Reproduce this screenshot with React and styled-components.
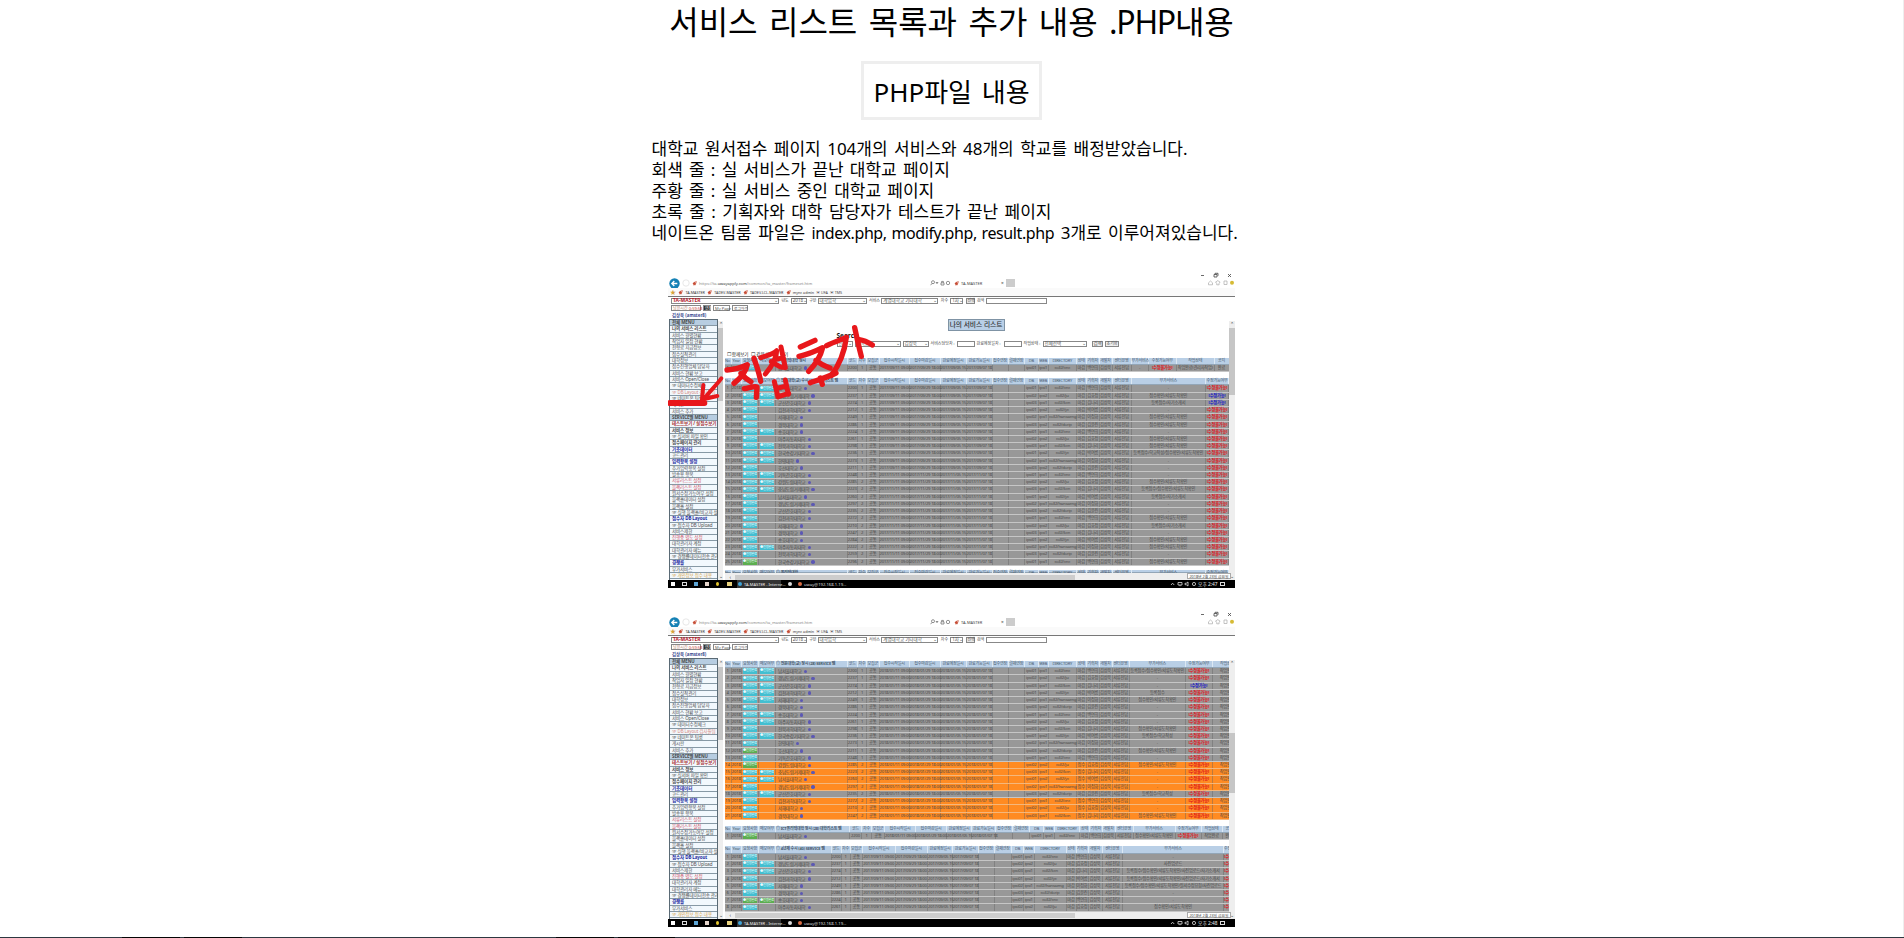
import React from "react";
import styled, { createGlobalStyle } from "styled-components";

const Global = createGlobalStyle`
  * { box-sizing: border-box; }
  html, body { margin: 0; background: #fff; }
  body {
    height: 938px; overflow: hidden; color: #000;
    font-family: "Noto Sans", "Noto Sans CJK KR", sans-serif;
  }
`;

const Page = styled.div`
  height: 938px;
  display: flex; flex-direction: column; align-items: center;
  border-right: 1px solid #eee;
`;
const Title = styled.h1`
  margin: 0; padding-top: 1px; height: 61px; line-height: 42px;
  font-size: 32px; font-weight: 400; white-space: nowrap; word-spacing: 3.1px;
`;
const Extension = styled.span`
  letter-spacing: -1.3px;
`;
const Badge = styled.h2`
  margin: 0; width: 181px; height: 59px; border: 3px solid #eee;
  line-height: 56px; text-align: center; font-size: 26px; font-weight: 400;
  white-space: nowrap; word-spacing: 3px;
`;
const Description = styled.div`
  margin: 18px 0 0; width: 600px; height: 131px; font-size: 17px; line-height: 21px;
`;
const Line = styled.p`
  margin: 0; white-space: nowrap; word-spacing: ${(p) => p.$ws}px;
`;
const FileNames = styled.span`
  font-size: 16px; letter-spacing: -0.4px; word-spacing: 1px;
`;
const Gallery = styled.div`
  flex: 1; display: flex; flex-direction: column; gap: 20px; width: 567px; min-height: 0;
`;
const Footer = styled.div`
  display: flex; align-self: stretch; height: 1px; background: #2d3740; margin-right: -1px;
`;
const Segment = styled.i`
  width: ${(p) => p.$w}px; height: 1px; background: ${(p) => (p.$dark ? "#050505" : "transparent")};
`;

const Shot = styled.section`
  position: relative; width: 567px; height: 319px; overflow: hidden; flex: none;
  display: flex; flex-direction: column; background: #fff;
  font-size: 5px; line-height: 7px; color: #444; white-space: nowrap;
`;
const Bar = styled.div`
  display: flex; align-items: center; gap: ${(p) => p.$gap || 3}px;
  height: ${(p) => p.$h}px; padding-left: ${(p) => p.$pl || 2}px; padding-top: ${(p) => p.$pt || 0}px; flex: none;
  ${(p) => p.$line && "border-bottom: 1px solid #777;"}
  background: ${(p) => p.$bg || "transparent"};
`;
const Spacer = styled.span`
  width: ${(p) => p.$w}px; flex: none;
`;
const Label = styled.span`
  flex: none; width: ${(p) => (p.$w ? p.$w + "px" : "auto")};
  color: ${(p) => p.$c || "#444"}; font-weight: ${(p) => (p.$b ? 700 : 400)};
  font-size: ${(p) => p.$s || 4.8}px;
`;
const Field = styled.span`
  flex: none; display: flex; justify-content: space-between; align-items: center;
  width: ${(p) => p.$w}px; height: ${(p) => p.$h || 6}px; line-height: 5px; padding-left: 1px; font-size: ${(p) => p.$s || 4.5}px;
  border: 0.5px solid #888; background: ${(p) => p.$bg || "#fff"}; color: ${(p) => p.$c || "#555"};
  font-weight: ${(p) => (p.$b ? 700 : 400)};
`;
const TabBlank = styled.span`
  width: 9px; height: 8px; background: #ccc; flex: none;
`;
const Viewport = styled.div`
  display: flex; height: 261px; flex: none; overflow: hidden;
`;
const Side = styled.nav`
  width: 49px; margin-left: 1px; border: 1px solid #5a6a75; border-bottom: 0; background: #f2f8fd; flex: none;
`;
const SideItem = styled.div`
  height: 6.34px; line-height: 5.8px; padding-left: 2px; font-size: 4.5px; letter-spacing: -0.1px;
  border-bottom: 0.5px solid #8799a5; color: ${(p) => p.$c || "#4c4c4c"};
  background: ${(p) => (p.$head ? "#b7cde1" : "transparent")};
  font-weight: ${(p) => (p.$b || p.$head ? 700 : 400)};
`;
const ScrollTrack = styled.div`
  display: flex; flex-direction: column; align-items: center; justify-content: space-between;
  width: ${(p) => p.$w}px; margin-top: ${(p) => p.$mt || 0}px; background: #eee; flex: none; color: #333;
`;
const Thumb = styled.i`
  width: 100%; height: ${(p) => p.$h}px; margin-bottom: auto; background: #c6c6c6;
`;
const Main = styled.main`
  width: 505px; padding-left: 0.5px; overflow: hidden; flex: none;
  display: flex; flex-direction: column;
`;
const ListTitle = styled.div`
  align-self: flex-start; margin: -1px 0 1px 223px; width: 57px; height: 12px; line-height: 10px;
  border: 1px solid #7f93a5; background: #b9cfe6; text-align: center; font-size: 6.7px; font-weight: 500; color: #333;
`;
const Gap = styled.div`
  height: ${(p) => p.$h}px; flex: none;
`;
const Grid = styled.div`
  display: grid; grid-template-columns: ${(p) => p.$cols}; height: ${(p) => p.$h || 7.22}px; flex: none;
  background: ${(p) => p.$bg}; border-bottom: 1px solid ${(p) => p.$edge || "#c4c4c4"};
`;
const Cell = styled.span`
  border-right: 0.8px solid ${(p) => (p.$head ? "#dce8f3" : "rgba(95,95,95,.4)")};
  text-align: ${(p) => (p.$left ? "left" : "center")};
  font-size: ${(p) => p.$s || 4.2}px; line-height: 6.2px; letter-spacing: -0.2px;
  color: ${(p) => p.$c || "#484848"}; font-weight: ${(p) => (p.$b ? 700 : 400)};
`;
const Tag = styled.b`
  display: block; margin: 0.3px auto 0; height: 5.6px; width: 14px; line-height: 5.4px; font-weight: 400; color: #e7fbff;
  background: ${(p) => (p.$green ? "#5cae50" : "#43bfd1")}; font-size: 3.2px;
`;
const Dot = styled.i`
  display: inline-block; width: 3.4px; height: 3.4px; border-radius: 50%; background: #5c58b4; margin-left: 2px;
`;
const HScroll = styled.div`
  height: 8px; margin-top: auto; display: flex; align-items: center; background: #eee; padding-left: 5px; flex: none;
`;
const HThumb = styled.i`
  margin-left: 4px; width: 340px; height: 4.5px; background: #cdcdcd;
`;
const DateTip = styled.div`
  position: absolute; right: 4px; bottom: 9px; width: 44px; height: 6px; line-height: 5px;
  background: #fff; border: 0.5px solid #aaa; font-size: 3.8px; text-align: center;
`;
const Taskbar = styled.footer`
  display: flex; align-items: center; height: 8px; background: #000; color: #eee; flex: none; padding-left: 3px;
  font-size: 4.3px;
`;
const TaskIcon = styled.i`
  width: ${(p) => p.$w || 4}px; height: 4px; margin-right: ${(p) => p.$mr || 7}px; flex: none;
  background: ${(p) => p.$c}; border: ${(p) => (p.$o ? "0.7px solid #ddd" : "0")};
  border-radius: ${(p) => (p.$round ? "50%" : "0")};
`;
const TaskTab = styled.span`
  display: flex; align-items: center; gap: 1px; width: 44px; height: 8px; background: #333; padding-left: 1px; margin-right: 7px; flex: none;
  font-size: 4px;
`;
const Ink = styled.svg`
  position: absolute; left: 0; top: 0; width: 567px; height: 319px;
`;
const SmallIcon = styled.svg`
  flex: none;
`;

const Rocket = () => (
  <SmallIcon width="5" height="5" viewBox="0 0 10 10">
    <path d="M9.5 0.5 4 2 1 5.5l2 .6L2 9l3-1.4.8 1.8L8 6z" fill="#c5472f" />
    <circle cx="6.5" cy="3.5" r="1" fill="#fff" />
  </SmallIcon>
);
const Back = () => (
  <SmallIcon width="11" height="11" viewBox="0 0 11 11">
    <circle cx="5.5" cy="5.5" r="5.2" fill="#1581b5" />
    <path d="M8.3 5.5H3M5.3 3 2.8 5.5 5.3 8" fill="none" stroke="#fff" strokeWidth="1.3" />
  </SmallIcon>
);
const Forward = () => (
  <SmallIcon width="8" height="8" viewBox="0 0 8 8">
    <circle cx="4" cy="4" r="3.2" fill="none" stroke="#ddd" strokeWidth=".7" />
  </SmallIcon>
);
const SearchTools = () => (
  <SmallIcon width="22" height="6" viewBox="0 0 22 6" fill="none" stroke="#666" strokeWidth=".7">
    <circle cx="3" cy="2.2" r="1.5" /><path d="M2 3.4.6 5.2M6 2.5h2l-1 1.2zM11 2.8h3V5h-3zM11.6 2.6V1.4h1.8v1.2" />
    <circle cx="18" cy="3" r="1.7" />
  </SmallIcon>
);
const WindowIcons = () => (
  <SmallIcon width="37" height="17" viewBox="0 0 37 17">
    <path d="M2 5.5h3M15 4.5h3v2.5h-3zM16 4V3.3h3v2.5M29 4l3 3M32 4l-3 3" fill="none" stroke="#444" strokeWidth=".8" />
    <path d="m9.5 12.8 2-1.8 2 1.8v2h-4zM16.5 12l1.6-.6.7-1 .8 1 1.5.6-1 1.3v1.5h-2.4v-1.5zM25 11h3v3.5h-3z" fill="none" stroke="#aaa" strokeWidth=".7" />
    <circle cx="33" cy="12.8" r="2" fill="#d6bb35" />
  </SmallIcon>
);
const TrayIcons = () => (
  <SmallIcon width="28" height="6" viewBox="0 0 28 6" fill="none" stroke="#ddd" strokeWidth=".8">
    <path d="m1 4 1.6-1.8L4.2 4M8 1.5h4V4H8zM10 4v1.2M15 2.3h1.2L18 1v4l-1.8-1.3H15z" />
    <circle cx="24" cy="3" r="1.6" />
  </SmallIcon>
);

const menu = [
  ["전체 MENU", "h"], ["나의 서비스 리스트", "b"], ["서비스 월별현황"], ["작업자 일정 현황"], ["전형료 지급정보"],
  ["접수실적관리"], ["대학정보"], ["접수진행업체 담당자"], ["서비스 현황 보고"], ["서비스 Open/Close"],
  ["☞ 데이터수정체크"], ["☞ DB Layout 검사툴팁", "", "#d88c83"], ["☞ 네이트온 팀룸"], ["게시판"], ["서비스 추가"],
  ["SERVICE별 MENU", "h"], ["테스트보기 / 실접수보기", "b", "#a33"], ["서비스 정보", "b"], ["☞ 실서버 파일 확인"], ["접수페이지 관리", "b"],
  ["기초데이터", "b", "#2329a0"], ["코드관리"], ["입력항목 설정", "b", "#2329a0"], ["추가입력항목 설정"], ["발송용 항목"],
  ["서류리스트 설정", "", "#d05263"], ["블랙리스트 설정", "", "#d05263"], ["원서수정가능여부 설정"], ["블랙홀데이터 설정"], ["블랙홀 설정"],
  ["☞ 실행 블랙홀/비교자 설정"], ["접수자 DB Layout", "b", "#2329a0"], ["☞ 접수자 DB Upload"], ["서비스제한"], ["진행중 별도 설정", "", "#d05263"],
  ["대학관리자 계정"], ["대학관리자 메뉴"], ["☞ 경쟁률데이터전송 관리"], ["경쟁률", "b", "#2329a0"], ["부가서비스"], ["☞ 개인정보 접수 내용", "", "#d8a74e"],
];

const left = [7, 10.5, 17, 17, 71.5, 10.5, 9, 12.5, 30.5, 30.5, 26, 26, 16, 16.5, 13.5, 10.5, 27.5, 10.5, 12.5, 13, 19];
const listCols = [...left, 74.5, 23, 30, 20];
const topCols = [...left, 17, 28.5, 37.5, 15];
const wideCols = [...left.slice(0, 20), 17, 56.5, 26.5, 30, 20];
const midCols = [7, 10.5, 17, 17, 74, 12, 10, 13, 31, 31, 25, 24, 17, 17, 14, 11, 25, 10, 12.5, 13, 18, 42, 26, 21, 14];
const groupCols = [7, 10.5, 17, 17, 55.5, 10, 9, 12.5, 32.5, 32.5, 25, 25.5, 16, 17.5, 12, 10.5, 32, 10, 12, 14, 20.5, 101, 20, 20, 20];
const px = (a) => a.map((n) => n + "px").join(" ");

const heads = ["No", "Year", "요청사항", "메모여부", "", "코드", "차수", "모집군", "접수시작일시", "접수마감일시", "완료예정일시", "완료가능일시", "접수연장", "결제연장", "DB", "WEB", "DIRECTORY", "상태", "기획자", "개발자", "센터운영", "부가서비스", "수정가능여부", "작업상태", "공지"];
const schools = ["남서울대학교", "경남도립거제대학", "군산간호대학교", "김천과학대학교", "서해대학교", "경북대학교", "송호대학교", "아주자동차대학", "전북과학대학교", "한국승강기대학교", "한영대학", "호산대학교", "기독간호대학교", "강원도립대학교", "충남도립거제대학"];
const planners = ["백연희", "김효정", "김나리", "박여름", "이정화", "김윤진"];
const dirs = ["coll2/cnc", "coll2/ju", "coll2/kcn", "coll2/yc", "coll2/hansaeng", "coll2/dorip"];
const extras = ["-", "접수확인/서류도착확인", "등록접수/자기소개서", "-", "접수확인/서류도착확인", "접수확인/서류도착확인", "-", "접수확인/서류도착확인", "접수확인/서류도착확인", "등록접수/학교작성/접수확인/서류도착확인", "-", "-", "-", "접수확인/서류도착확인", "등록접수/접수확인/서류도착확인", "등록접수/자기소개서", "-"];
const wideExtras = ["등록접수/접수확인/서류도착확인", "-", "-", "등록접수", "접수확인/서류도착확인", "-", "-", "-", "접수확인/서류도착확인", "등록접수/학교작성", "-", "접수확인/서류도착확인", "-", "접수확인/서류도착확인", "-", "-", "-", "등록접수/학교작성", "-", "-", "접수확인/서류도착확인"];
const groupExtras = ["-", "사진업로드", "등록접수/접수확인/서류도착확인/사진업로드/자기소개서", "등록접수/접수확인/서류도착확인/사진업로드/자기소개서", "등록접수/접수확인/서류도착확인/원서수정요청/사진업로드", "-", "-", "접수확인/서류도착확인"];

function Header({ cols, title, h }) {
  return (
    <Grid $cols={px(cols)} $bg="#b9cfe6" $edge="#93a6b7" $h={h}>
      {heads.map((t, i) => (
        <Cell key={i} $head $left={i === 4} $b={i === 4} $c="#47576a" $s={4}>{i === 4 ? title : t}</Cell>
      ))}
    </Grid>
  );
}

function Row({ cols, i, year = "2017/09", orange, green, two, blue, state, extra }) {
  const s = schools[i % schools.length];
  const vals = [i + 1, "2018", null, null, s, 2200 + ((i * 37) % 99), i > 12 ? 2 : 1, "공통", year + "/11 09:00", year + "/29 18:00", year + "/05 15", year + "/07 18", "", "", "ipsi0" + (i % 3 + 1), "ipsi" + (i % 2 + 1), dirs[i % 6], orange ? "접수" : "마감", planners[i % 6], "김상욱", "서류전담", extra || extras[i % extras.length], "[수정불가능]", state || "작업완료", "완료"];
  return (
    <Grid $cols={px(cols)} $bg={orange ? "#ff8b22" : "#989898"} $edge={orange ? "#f4b77c" : "#c6c6c6"}>
      {vals.map((v, k) => {
        if (k === 2) return <Cell key={k}><Tag $green={green}>●진행완료</Tag></Cell>;
        if (k === 3) return <Cell key={k}>{two ? <Tag $green={green && two === 2}>●진행완료</Tag> : null}</Cell>;
        if (k === 4) return <Cell key={k} $left $s={4.5}>&nbsp;&nbsp;{v}<Dot /></Cell>;
        if (k === 22) return <Cell key={k} $b $c={blue ? "#1515c8" : "#e0141b"}>{blue ? "[수정가능]" : v}</Cell>;
        return <Cell key={k}>{v}</Cell>;
      })}
    </Grid>
  );
}

function Chrome({ time, top, children, ink, rightThumb, rightMt }) {
  return (
    <Shot>
      <Bar $h={19} $gap={2} $pl={1}>
        <Bar $h={19} $pt={9} $gap={2} $pl={0.1}>
          <Back />
          <Forward />
          <Rocket />
          <Label $w={229} $c="#888" $s={4}>https://ta.<Label $c="#333" $s={4}>uwayapply.com</Label>/common/ta_master/frameset.htm</Label>
          <SearchTools />
          <Rocket />
          <Label $w={38} $s={4}>TA-MASTER</Label>
          <Label>×</Label>
          <TabBlank />
        </Bar>
        <Spacer $w={180} />
        <WindowIcons />
      </Bar>
      <Bar $h={9} $gap={2.2} $line $bg="#fafafa">
        <Label $c="#d6a23c" $s={6}>★</Label>
        {["TA-MASTER", "TADEV-MASTER", "TADEV.LCL-MASTER", "mync admin"].map((t) => (
          <React.Fragment key={t}><Rocket /><Label $s={3.7} $c="#333">{t}</Label></React.Fragment>
        ))}
        <Label $s={3.7}>▣ UFA</Label><Label $s={3.7}>▣ TMS</Label>
      </Bar>
      <Bar $h={7.5} $gap={2.4} $pl={3}>
        <Field $w={108} $c="#b3202a" $b $s={5}>TA-MASTER<Label>⌄</Label></Field>
        <Label $w={7} $s={4}>년도</Label><Field $w={16}>2018<Label>⌄</Label></Field>
        <Label $w={6} $s={4}>구분</Label><Field $w={49}>대학입학<Label>⌄</Label></Field>
        <Label $w={10} $s={4}>서비스</Label><Field $w={57}>계명대학교 기타대학<Label>⌄</Label></Field>
        <Label $w={7} $s={4}>차수</Label><Field $w={13}>1차<Label>⌄</Label></Field>
        <Field $w={9} $bg="#e6e6e6" $s={4}>선택</Field>
        <Label $w={7} $s={4}>검색</Label><Field $w={61} />
      </Bar>
      <Bar $h={7} $gap={2} $pl={3}>
        <Field $w={30} $c="#c5362f"><Label $s={4} $c="#b9846b">남은시간 <Label $s={4} $c="#c5362f">0:59:58</Label></Label></Field>
        <Field $w={8} $bg="#333" $c="#fff" $s={4}>연장</Field>
        <Field $w={17} $s={4}>My Page</Field><Field $w={16} $s={3.8}>로그아웃</Field>
      </Bar>
      <Bar $h={7.5} $pl={4}><Label $b $c="#3c4a90" $s={4.4}>김상욱 (amster8)</Label></Bar>
      <Viewport>
        <Side>
          {menu.map(([t, k, c], i) => (
            <SideItem key={i} $head={k === "h"} $b={k === "b"} $c={c}>{t}</SideItem>
          ))}
        </Side>
        <ScrollTrack $w={5} $mt={2}><span>⌃</span><Thumb $h={73} /><span>⌄</span></ScrollTrack>
        <Spacer $w={1} />
        <Main>
          <Gap $h={top} />
          {children}
          <HScroll>‹<HThumb /></HScroll>
        </Main>
        <ScrollTrack $w={6} $mt={2}><span>⌃</span><Gap $h={rightMt} /><Thumb $h={rightThumb} /><span>⌄</span></ScrollTrack>
      </Viewport>
      {ink}
      <DateTip>2018년 2월 23일 금요일</DateTip>
      <Taskbar>
        <TaskIcon $c="#fff" $mr={7} /><TaskIcon $o $w={5} /><TaskIcon $c="#5da5d5" /><TaskIcon $c="#e6d6cc" /><TaskIcon $c="#e5c62e" $round $w={3} $mr={8} /><TaskIcon $c="#ead37f" $w={5} $mr={5} />
        <TaskTab><TaskIcon $c="#3fa4d8" $round $mr={1} />TA-MASTER - Interne...</TaskTab>
        <TaskIcon $c="#ddd" $round $mr={6} /><TaskIcon $c="#d96d45" $round $mr={2} />
        <Label $c="#ddd" $w={366} $s={4.2}>uway@192.168.1.19...</Label>
        <TrayIcons />
        <Label $c="#eee" $w={22} $s={4.8}>오후 {time}</Label>
        <TaskIcon $o $w={4.5} $mr={1} />
      </Taskbar>
    </Shot>
  );
}

const Handwriting = () => (
  <Ink viewBox="24 -138 1701 957" fill="none" stroke="#e8171b" strokeLinecap="round" strokeLinejoin="round">
    <path strokeWidth="18" d="M30 264H133" />
    <path strokeWidth="12" d="M184 190C168 212 146 232 134 250M130 210 126 254 172 243" />
    <path strokeWidth="16" d="M201 165C222 164 244 158 262 149C258 171 244 187 222 205M243 175C252 187 263 194 273 200M282 130C288 149 297 171 302 199M253 221C268 219 284 212 291 216L289 247" />
    <path strokeWidth="15" d="M302 128C323 121 339 118 350 107C350 131 336 153 316 177M334 140C348 147 357 155 366 157M363 96 376 158M346 134 370 128M343 200 354 246M376 195 385 238M349 220 380 213M355 245 386 235" />
    <path strokeWidth="16" d="M421 96 465 76M417 124C441 119 466 109 488 98C481 127 465 150 446 169M468 136C480 147 494 153 510 159M451 203C478 194 502 187 528 174M481 189 487 208" />
    <path strokeWidth="16" d="M500 92C522 81 543 74 559 67C554 108 542 144 514 181M584 38C590 66 596 94 604 124M598 74C612 76 624 82 637 90" />
  </Ink>
);

function FirstShot() {
  const pairs = [0, 1, 2, 6, 8, 9, 10, 12, 13, 14, 22];
  return (
    <Chrome time="2:47" top={0} ink={<Handwriting />} rightThumb={67} rightMt={0}>
      <Gap $h={0.5} />
      <ListTitle>나의 서비스 리스트</ListTitle>
      <Bar $h={8} $pl={112}><Label $b $c="#111" $s={6.5}>Search</Label></Bar>
      <Bar $h={8} $pl={112} $gap={2}>
        <Field $w={16}>전체<Label>⌄</Label></Field><Field $w={46}>대학교<Label>⌄</Label></Field><Field $w={26}>김상욱<Label>⌄</Label></Field>
        <Label $w={24} $s={4}>서비스담당자 :</Label><Field $w={18} /><Label $w={25} $s={4}>완료예정일자 :</Label><Field $w={18} />
        <Label $w={17} $s={4}>작업상태 :</Label><Field $w={44}>전체선택<Label>⌄</Label></Field>
        <Spacer $w={1} /><Field $w={11} $bg="#eee">검색</Field><Field $w={14} $bg="#eee" $s={4}>초기화</Field>
      </Bar>
      <Gap $h={3} />
      <Bar $h={7} $gap={2}><Label $c="#222" $s={4.6}>☐ 함께보기 &nbsp;☐ 같은 대학만 보기</Label></Bar>
      <Header cols={topCols} title="◎ 폴리텍대학 정시" h={7} />
      <Row cols={topCols} i={0} state="작업완료(관리자작업)" />
      <Gap $h={6.5} />
      <Header cols={listCols} title="◎ 전문대학(교) 수시 (28) 대학리스트 맵" h={7.2} />
      {Array.from({ length: 25 }, (_, i) => (
        <Row key={i} cols={listCols} i={i} year={i < 12 ? "2017/09" : "2017/11"} two={pairs.includes(i)} green={i === 24} blue={i === 1 || i === 2} />
      ))}
      <Gap $h={4.5} />
      <Header cols={listCols} title="◎ 폴리텍대학" h={3} />
    </Chrome>
  );
}

function SecondShot() {
  const pairs = [0, 1, 2, 3, 4, 6, 7, 9, 14, 15, 17];
  return (
    <Chrome time="2:48" top={3} rightThumb={60} rightMt={66}>
      <Header cols={wideCols} title="◎ 전문대학(교) 정시 (28) SERVICE 맵" h={7.2} />
      {Array.from({ length: 21 }, (_, i) => (
        <Row key={i} cols={wideCols} i={i} year="2018/01" orange={i > 12 && i !== 17} two={pairs.includes(i)} green={i === 11 || i === 13} blue={i === 2} extra={wideExtras[i]} />
      ))}
      <Gap $h={6.3} />
      <Header cols={midCols} title="◎ ICT폴리텍대학 정시 (28) 대학리스트 맵" h={7} />
      <Row cols={midCols} i={0} green year="2018/01" extra="접수확인/서류도착확인" />
      <Gap $h={5.6} />
      <Header cols={groupCols} title="◎ 4년제 수시 (40) SERVICE 맵" h={8} />
      {Array.from({ length: 8 }, (_, i) => (
        <Row key={i} cols={groupCols} i={i} two={[1, 2, 4].includes(i) ? 1 : i === 6 ? 2 : 0} green={i === 6} extra={groupExtras[i]} />
      ))}
    </Chrome>
  );
}

const segments = [[122], [58, 1], [4], [58, 1], [314], [58, 1], [4], [57, 1]];

export default function App() {
  return (
    <>
      <Global />
      <Page>
        <Title>서비스 리스트 목록과 추가 내용 <Extension>.PHP</Extension>내용</Title>
        <Badge>PHP파일 내용</Badge>
        <Description>
          <Line $ws={2}>대학교 원서접수 페이지 104개의 서비스와 48개의 학교를 배정받았습니다.</Line>
          <Line $ws={1.8}>회색 줄 : 실 서비스가 끝난 대학교 페이지</Line>
          <Line $ws={1.8}>주황 줄 : 실 서비스 중인 대학교 페이지</Line>
          <Line $ws={2}>초록 줄 : 기획자와 대학 담당자가 테스트가 끝난 페이지</Line>
          <Line $ws={2}>네이트온 팀룸 파일은 <FileNames>index.php, modify.php, result.php</FileNames> 3개로 이루어져있습니다.</Line>
        </Description>
        <Gallery>
          <FirstShot />
          <SecondShot />
        </Gallery>
        <Footer>{segments.map(([w, d], i) => <Segment key={i} $w={w} $dark={d} />)}</Footer>
      </Page>
    </>
  );
}
